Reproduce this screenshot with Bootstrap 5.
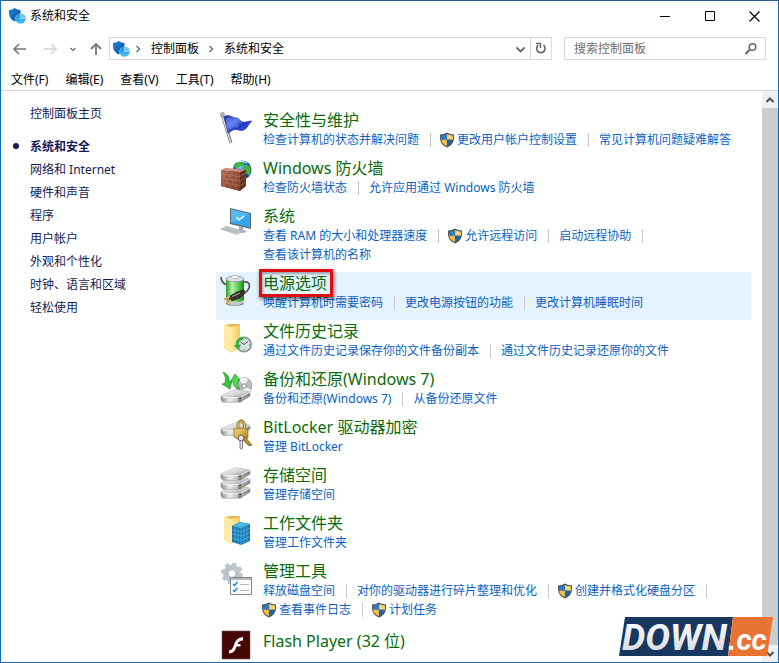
<!DOCTYPE html>
<html lang="zh-CN">
<head>
<meta charset="utf-8">
<meta name="viewport" content="width=device-width, initial-scale=1">
<title>系统和安全</title>
<link href="https://cdn.jsdelivr.net/npm/bootstrap@5.3.0/dist/css/bootstrap.min.css" rel="stylesheet">
<style>
body{font-family:"Noto Sans","Noto Sans CJK SC",sans-serif;font-size:12px;line-height:18px;color:#000;background:#fff}
.window{border:1px solid #0f6cbd;border-top-color:#2b6197}
a{text-decoration:none}
a:hover{text-decoration:underline}
.plain{border:0;background:none;padding:0;color:inherit;display:flex;align-items:center;justify-content:center}
.titlebar{height:30px;padding:0 1px 0 8px}
.wbtn{width:45px;height:28px}
.toolbar{padding:6px 12px 6px 8px}
.field{border:1px solid #d9d9d9;height:23px}
.crumbs{padding-left:3px}
.crumbs a{color:#000}
.chev{width:21px}
.search{flex:0 0 202px;min-width:0;margin-left:12px}
.search input{width:0;border:0;outline:0;min-width:0;padding:0 0 0 9px;color:#000;font-size:12px}
.search input::placeholder{color:#6d6d6d;opacity:1}
.menubar{gap:17px;padding:5px 10px 1px;border-bottom:1px solid #d9d9d9}
.menubar button{line-height:18px}
.sidebar{width:215px;padding:11px 0 0 29px;line-height:23px}
.sidebar a{color:#151c55}
.sidebar .home{margin-bottom:10px}
.sidebar .now{position:relative;font-weight:700}
.sidebar .now::before{content:"";position:absolute;left:-17px;top:8px;width:6px;height:6px;border-radius:50%;background:#151c55}
.content{padding:18px 11px 0 0}
.entry{padding:0 0 8px 4px;gap:11px}
.entry.hot{background:#e5f3ff}
.entry>svg{width:32px;height:32px;margin-top:3px;flex:none}
.entry h2{font-size:16px;line-height:22px;font-weight:400;margin:0 0 -1px}
.entry h2 a{color:#0b6b0b}
.links{line-height:19px}
.links a{color:#0b5fc0}
.links li{display:flex;align-items:center}
.links li:not(:last-child)::after{content:"";width:1px;height:14px;background:#c9c9c9;margin:0 10px 0 11px}
.links svg{width:16px;height:16px;margin:0 2px 0 -2px;flex:none}
.entry.solo{padding-top:3px}
.entry.solo>svg{margin-top:0}
.marked{position:relative;display:inline-block}
.marked::after{content:"";position:absolute;inset:-3px -6px -3px -4px;border:3px solid #e30b12;box-shadow:1px 2px 4px rgba(0,0,0,.6),inset 1px 2px 3px rgba(0,0,0,.35);pointer-events:none}
.scroller{width:16px;background:#f0f0f0}
.scroller button{height:17px;width:16px}
.thumb{background:#cdcdcd}
.brand{position:absolute;right:4px;bottom:4px;width:156px;height:42px}
.brand text{font-family:Roboto,"Liberation Sans",sans-serif;font-weight:700;font-style:italic}
</style>
</head>
<body>
<svg width="0" height="0" class="position-absolute" aria-hidden="true">
<defs>
<linearGradient id="gBlue" x2="1" y2="1"><stop stop-color="#1c86dc"/><stop offset="1" stop-color="#0a4e9c"/></linearGradient>
<linearGradient id="gCyan" x2="0" y2="1"><stop stop-color="#1592dc"/><stop offset="1" stop-color="#4cc4f4"/></linearGradient>
<linearGradient id="gFlag" x2="1" y2="1"><stop stop-color="#101c90"/><stop offset=".35" stop-color="#6a86f0"/><stop offset=".6" stop-color="#2437c4"/><stop offset="1" stop-color="#5c78e4"/></linearGradient>
<linearGradient id="gFold" x2="1" y2="0"><stop stop-color="#ffe9a2"/><stop offset="1" stop-color="#f1ca62"/></linearGradient>
<linearGradient id="gMetal" x2="1" y2="1"><stop stop-color="#fafafa"/><stop offset=".55" stop-color="#d4d4d4"/><stop offset="1" stop-color="#8a8a8a"/></linearGradient>
<linearGradient id="gSide" x2="1" y2="0"><stop stop-color="#8a8a8a"/><stop offset=".3" stop-color="#eee"/><stop offset="1" stop-color="#7b7b7b"/></linearGradient>
<linearGradient id="gBat" x2="1" y2="0"><stop stop-color="#2f9a35"/><stop offset=".35" stop-color="#b5f3a0"/><stop offset=".65" stop-color="#62cf5a"/><stop offset="1" stop-color="#1d8424"/></linearGradient>
<linearGradient id="gBrick" x2="1" y2="1"><stop stop-color="#b06a50"/><stop offset="1" stop-color="#7c3a28"/></linearGradient>
<linearGradient id="gGold" x2="1" y2="1"><stop stop-color="#f6dc82"/><stop offset="1" stop-color="#b07a16"/></linearGradient>
<linearGradient id="gSilver" x2="0" y2="1"><stop stop-color="#fff"/><stop offset="1" stop-color="#d3d7dc"/></linearGradient>
<radialGradient id="gGlobe" cx=".4" cy=".3"><stop stop-color="#9fe0ff"/><stop offset=".5" stop-color="#2a83d8"/><stop offset="1" stop-color="#0b3a8c"/></radialGradient>
<symbol id="sec" viewBox="0 0 17 16"><path d="M0 2Q3 2 5.800 0 8.500 2 11.500 2V6Q11 11 5.800 13.500 0 11 0 5Z" fill="url(#gBlue)"/><circle cx="11.500" cy="10.700" r="5.200" fill="#d5f0fd"/><circle cx="11.500" cy="10.700" r="5" fill="url(#gCyan)"/><path d="M11.500 10.700V5.700A5 5 0 0 1 16.500 10.200Z" fill="#6cc8f5"/><path d="M11.500 10.700 16.500 10.200M11.500 10.700V5.700" stroke="#d5f0fd" stroke-width=".5"/></symbol>
<symbol id="shield" viewBox="0 0 16 16"><path d="M8 .4Q11 2.400 15 2.500V6Q15 12.500 8 15.600 1 12.500 1 6V2.500Q5 2.400 8 .4Z" fill="#4b5157"/><path d="M7.900 1.900V7.800H2V3.500Q5.500 3.300 7.900 1.900Z" fill="#2b7dc4"/><path d="M8.100 1.900V7.800H14V3.500Q10.500 3.300 8.100 1.900Z" fill="#fcd06a"/><path d="M7.900 7.800V14.200Q2.800 12 2.100 7.800Z" fill="#f8c045"/><path d="M8.100 7.800V14.200Q13.200 12 13.900 7.800Z" fill="#1d65aa"/></symbol>
<symbol id="drive" viewBox="0 0 32 14"><path d="M1 7 15 .8Q17 .3 19 .8L31 3V7L21 13.500H3L1 11Z" fill="url(#gSide)" stroke="#888" stroke-width=".5"/><path d="M1 7 15 .8Q17 .3 19 .8L31 3 20 8.500H3Z" fill="url(#gMetal)"/><path d="M3 8.700H20L31 3.300" fill="none" stroke="#fff" stroke-width=".8"/><path d="M19 9 22 8V12.500L19 13Z" fill="#4d574d"/><circle cx="20.500" cy="11" r=".9" fill="#7ce43b"/></symbol>
</defs>
</svg>

<div class="window vh-100 d-flex flex-column overflow-hidden position-relative">
<header>
 <div class="titlebar d-flex align-items-center">
  <svg width="17" height="16"><use href="#sec"/></svg><span class="ms-1 flex-grow-1">系统和安全</span>
  <button class="plain wbtn" aria-label="最小化"><svg width="10" height="10"><path d="M0 5.500H10" stroke="#000"/></svg></button>
  <button class="plain wbtn" aria-label="最大化"><svg width="10" height="10"><path d="M.5.5H9.500V9.500H.5Z" fill="none" stroke="#000"/></svg></button>
  <button class="plain wbtn" aria-label="关闭"><svg width="11" height="11"><path d="M.5.5 10.500 10.500M10.500.5.500 10.500" stroke="#000" stroke-width="1.200"/></svg></button>
 </div>
 <div class="toolbar d-flex align-items-center">
  <button class="plain" aria-label="后退"><svg width="24" height="16"><path d="M5 8H17M10 3 5 8l5 5" fill="none" stroke="#777" stroke-width="1.600"/></svg></button>
  <button class="plain ms-1" aria-label="前进" disabled><svg width="26" height="16"><path d="M7 8H19M14 3l5 5-5 5" fill="none" stroke="#d4d4d4" stroke-width="1.600"/></svg></button>
  <button class="plain" aria-label="最近"><svg width="22" height="16"><path d="M7.500 7l2.500 2.500L12.500 7" fill="none" stroke="#777" stroke-width="1.500"/></svg></button>
  <button class="plain" aria-label="上移"><svg width="24" height="16"><path d="M11 14V3M6 8l5-5 5 5" fill="none" stroke="#777" stroke-width="1.800"/></svg></button>
  <nav class="field crumbs d-flex align-items-center flex-grow-1" aria-label="地址">
   <svg width="17" height="16"><use href="#sec"/></svg>
   <svg class="chev" height="12"><path d="M6.500 3l3 3-3 3" fill="none" stroke="#666" stroke-width="1.300"/></svg>
   <a href="#">控制面板</a>
   <svg class="chev ms-1" height="12"><path d="M6.500 3l3 3-3 3" fill="none" stroke="#666" stroke-width="1.300"/></svg>
   <a href="#">系统和安全</a>
   <button class="plain ms-auto" aria-label="展开地址"><svg width="18" height="14"><path d="M4.500 5.500l4 4 4-4" fill="none" stroke="#6a6a6a" stroke-width="1.800"/></svg></button>
  </nav>
  <button class="plain field border-start-0 px-1" aria-label="刷新"><svg width="12" height="13"><path d="M3.200 3.200A4.200 4.200 0 1 0 8.500 3.200" fill="none" stroke="#6a6a6a" stroke-width="1.700"/><path d="M1 1.500H5.500V6" fill="none" stroke="#6a6a6a" stroke-width="1.500"/></svg></button>
  <form class="field search d-flex align-items-center">
   <input class="flex-grow-1" type="search" placeholder="搜索控制面板" aria-label="搜索控制面板">
   <button type="button" class="plain" aria-label="搜索"><svg width="27" height="14"><circle cx="14.500" cy="5" r="3.300" fill="none" stroke="#666" stroke-width="1.500"/><path d="M12 7.500 7.500 12" stroke="#666" stroke-width="1.900"/></svg></button>
  </form>
 </div>
 <nav class="menubar d-flex" aria-label="菜单"><button class="plain">文件(F)</button><button class="plain">编辑(E)</button><button class="plain">查看(V)</button><button class="plain">工具(T)</button><button class="plain">帮助(H)</button></nav>
</header>

<div class="d-flex flex-grow-1 overflow-hidden">
<nav class="sidebar flex-shrink-0 d-flex flex-column align-items-start" aria-label="控制面板">
 <a class="home" href="#">控制面板主页</a>
 <a class="now" href="#" aria-current="page">系统和安全</a>
 <a href="#">网络和 Internet</a><a href="#">硬件和声音</a><a href="#">程序</a><a href="#">用户帐户</a><a href="#">外观和个性化</a><a href="#">时钟、语言和区域</a><a href="#">轻松使用</a>
</nav>
<main class="content flex-grow-1">

 <section class="entry d-flex">
  <svg viewBox="0 0 32 32"><path d="M2 2 11 31" stroke="#777" stroke-width="3"/><path d="M1.800 2 10.800 31" stroke="#e4e4e4" stroke-width="1.200"/><circle cx="2.500" cy="2.500" r="2" fill="#bbb" stroke="#777" stroke-width=".6"/><path d="M4 5C9 1 12 6 17 6 20 6 19 9 23 10 26 10.500 29 8.500 32 9 28 12 28 16 24 18 19 20 17 16 13 18 10 20 9 21 8 21Z" fill="url(#gFlag)" stroke="#1a2890" stroke-width=".5"/><path d="M6 6C10 4 12 9 17 9L18 16C14 14 11 17 9 18Z" fill="#6782f0" opacity=".5"/></svg>
  <div><h2><a href="#">安全性与维护</a></h2><ul class="links list-unstyled d-flex flex-wrap mb-0"><li><a href="#">检查计算机的状态并解决问题</a></li><li><svg><use href="#shield"/></svg><a href="#">更改用户帐户控制设置</a></li><li><a href="#">常见计算机问题疑难解答</a></li></ul></div>
 </section>

 <section class="entry d-flex">
  <svg viewBox="0 0 32 32"><circle cx="22" cy="10" r="9.500" fill="url(#gGlobe)"/><path d="M15 4Q20 0 24 2L22 6 17 8 14 7ZM24 6Q28 3 30 7 32 12 29 16L26 13 24 10Z" fill="#46b43a"/><path d="M17 2Q22 0 27 3" stroke="#d6f5ff" fill="none"/><path d="M1 10 20 12 26 9.500V26L20 31 1 26Z" fill="#64301f"/><path d="M1 10 20 12V31L1 26Z" fill="url(#gBrick)"/><path d="M1 10 5 8 26 9.500 20 12Z" fill="#cf9079"/><path d="M1 14 20 16.500M1 18 20 21M1 22 20 26M6 10.500V14.600M12 11.500V15.500M4 14.500V18.500M10 15.500V19.500M16 16V20.500M7 19V23.300M13 20V24.500M4 22.800V27M10 24V28.500M16 25V30M20 16.500 26 13M20 21 26 17M20 26 26 21.500" stroke="#c08a76" stroke-width=".5"/></svg>
  <div><h2><a href="#">Windows 防火墙</a></h2><ul class="links list-unstyled d-flex flex-wrap mb-0"><li><a href="#">检查防火墙状态</a></li><li><a href="#">允许应用通过 Windows 防火墙</a></li></ul></div>
 </section>

 <section class="entry d-flex">
  <svg viewBox="0 0 32 32"><path d="M10 0 31 5V21L10 16Z" fill="#58636c"/><path d="M11 1.300 30 6V19.500L11 15Z" fill="#35a6ec"/><path d="M11 1.300 30 6 11 15Z" fill="#69c4f6" opacity=".65"/><path d="M16.500 9 19 12 24 8" fill="none" stroke="#fff" stroke-width="1.300"/><path d="M19 18V22L16 24 24 25 27 23 23 22V19" fill="#a4abb0"/><path d="M1 21 7 18.500 23 23 17 26.500Z" fill="#d5d8da" stroke="#989da0" stroke-width=".6"/><path d="M3 21 19 25M5 20 21 24M5 22.500 10 20M9 23.500 14 21M13 24.500 18 22" stroke="#989da0" stroke-width=".5"/></svg>
  <div><h2><a href="#">系统</a></h2><ul class="links list-unstyled d-flex flex-wrap mb-0"><li><a href="#">查看 RAM 的大小和处理器速度</a></li><li><svg><use href="#shield"/></svg><a href="#">允许远程访问</a></li><li><a href="#">启动远程协助</a></li><li><a href="#">查看该计算机的名称</a></li></ul></div>
 </section>

 <section class="entry hot d-flex">
  <svg viewBox="0 0 32 32"><path d="M1 2Q1 8 7 10M23 7Q31 6 29 13 27 18 20 20" stroke="#555" stroke-width="1.700" fill="none"/><ellipse cx="15" cy="28.500" rx="9" ry="2.600" fill="#888"/><path d="M6 4V27Q15 33 24 27V4Z" fill="url(#gBat)"/><path d="M6 25V27.500Q15 33.500 24 27.500V25Q15 30 6 25Z" fill="#c9c9c9"/><ellipse cx="15" cy="4" rx="9" ry="2.800" fill="#e0e0e0" stroke="#888" stroke-width=".7"/><ellipse cx="15" cy="2" rx="4" ry="1.600" fill="#fafafa" stroke="#999" stroke-width=".6"/><path d="M10 21 17 17 24 15 25 18 20 23 12 26 9 24Z" fill="#3a3330" stroke="#1c1816" stroke-width=".7"/><path d="M12 21.500 20 18" stroke="#aaa"/><path d="M10 21.500 4 24.500M11 25 6 28" stroke="#d9a766" stroke-width="2"/></svg>
  <div><h2><a class="marked" href="#">电源选项</a></h2><ul class="links list-unstyled d-flex flex-wrap mb-0"><li><a href="#">唤醒计算机时需要密码</a></li><li><a href="#">更改电源按钮的功能</a></li><li><a href="#">更改计算机睡眠时间</a></li></ul></div>
 </section>

 <section class="entry d-flex">
  <svg viewBox="0 0 32 32"><path d="M7 1H20V25L7 23Z" fill="#e6b950"/><path d="M4 1 11 4V30L4 25Z" fill="#ffe9a5"/><path d="M11 4 20 2V25L11 30Z" fill="url(#gFold)"/><circle cx="24" cy="21.500" r="7.200" fill="#d9dee2" stroke="#8a9298" stroke-width="1.600"/><path d="M20.500 19 24 21.500 28 18.500M24 26.500V27.500M29 22H30M24 15.500V16.500" stroke="#535a60" stroke-width="1" fill="none"/><path d="M23 14Q15 15 16 22H13.500L18.500 27 21 21.500H18.500Q19 17.500 23 16.500Z" fill="#35ac48"/></svg>
  <div><h2><a href="#">文件历史记录</a></h2><ul class="links list-unstyled d-flex flex-wrap mb-0"><li><a href="#">通过文件历史记录保存你的文件备份副本</a></li><li><a href="#">通过文件历史记录还原你的文件</a></li></ul></div>
 </section>

 <section class="entry d-flex">
  <svg viewBox="0 0 32 32"><ellipse cx="24" cy="15" rx="8" ry="8.500" fill="#bdbdbd" stroke="#888" stroke-width=".7"/><path d="M24 15 19 8.500Q23 5 28 8ZM24 15 31 19Q28 24 22 23Z" fill="#f5f5f5"/><circle cx="24" cy="15" r="2.200" fill="#fff" stroke="#888"/><use href="#drive" y="18" width="31" height="14"/><path d="M3 1Q10 4 9 11L12 9.500 10 18 2 13 5 12.500Q7 6 3 1Z" fill="#38c83e" stroke="#158a1e" stroke-width=".7"/><path d="M15 3 20 9 18 9.500Q17 15 20 18 13 17 13 10L10.500 10.500Z" fill="#4fd654" stroke="#158a1e" stroke-width=".7"/></svg>
  <div><h2><a href="#">备份和还原(Windows 7)</a></h2><ul class="links list-unstyled d-flex flex-wrap mb-0"><li><a href="#">备份和还原(Windows 7)</a></li><li><a href="#">从备份还原文件</a></li></ul></div>
 </section>

 <section class="entry d-flex">
  <svg viewBox="0 0 32 32"><use href="#drive" y="3" width="31" height="14"/><path d="M18 9V5Q21 -1 24.500 5V9" fill="none" stroke="#8d6c22" stroke-width="2.800"/><path d="M18 9V5Q21 0 24.500 5V9" fill="none" stroke="#f0d57b" stroke-width="1.200"/><path d="M14 10 24 9 28 11V19L19 21 14 18Z" fill="url(#gGold)" stroke="#8d671c" stroke-width=".7"/><path d="M24 17 32 26 29 27 22 20Z" fill="#b98b32" stroke="#76521a" stroke-width=".7"/><circle cx="21" cy="19" r="2.800" fill="#eee" stroke="#666"/><path d="M20 21.500H22.500V29L21.300 30.500 20 29Z" fill="#e6e6e6" stroke="#666" stroke-width=".8"/></svg>
  <div><h2><a href="#">BitLocker 驱动器加密</a></h2><ul class="links list-unstyled d-flex flex-wrap mb-0"><li><a href="#">管理 BitLocker</a></li></ul></div>
 </section>

 <section class="entry d-flex">
  <svg viewBox="0 0 32 32"><use href="#drive" y="18" width="31" height="14"/><use href="#drive" y="9" width="31" height="14"/><use href="#drive" y="0" width="31" height="14"/></svg>
  <div><h2><a href="#">存储空间</a></h2><ul class="links list-unstyled d-flex flex-wrap mb-0"><li><a href="#">管理存储空间</a></li></ul></div>
 </section>

 <section class="entry d-flex">
  <svg viewBox="0 0 32 32"><path d="M7 1H20V25L7 23Z" fill="#e6b950"/><path d="M4 1 11 4V29L4 25Z" fill="#ffe9a5"/><path d="M11 4 20 2V25L11 29Z" fill="url(#gFold)"/><path d="M12 11 20 7 30 9V26L21 30 12 27Z" fill="#1878b5"/><path d="M12 11 20 7 30 9 21 13Z" fill="#4fb4e2"/><path d="M21 13V30M12 15 21 17 30 13M12 19 21 21 30 17M12 23 21 25.500 30 21.500M15 12V28M18 12.500V29M24 12V28.500M27 10.500V27" stroke="#58b4e0" stroke-width=".7" fill="none"/></svg>
  <div><h2><a href="#">工作文件夹</a></h2><ul class="links list-unstyled d-flex flex-wrap mb-0"><li><a href="#">管理工作文件夹</a></li></ul></div>
 </section>

 <section class="entry d-flex">
  <svg viewBox="0 0 32 32"><circle cx="12" cy="10.500" r="6.500" fill="none" stroke="#bec5cc" stroke-width="5"/><circle cx="12" cy="10.500" r="9.500" fill="none" stroke="#bec5cc" stroke-width="3" stroke-dasharray="4 3.460"/><circle cx="12" cy="10.500" r="4" fill="#fff" stroke="#97a1aa" stroke-width=".8"/><path d="M10.500 14.500H31.500V31.500H10.500Z" fill="#fbfcfd" stroke="#84898e"/><path d="M11 15H31V17H11Z" fill="#b3b9bf"/><path d="M13 21l1.500 1.500 3-3.500M13 27l1.500 1.500 3-3.500" stroke="#1685d0" stroke-width="1.400" fill="none"/><path d="M20 21.500H29M20 27.500H29" stroke="#b3b9bf"/></svg>
  <div><h2><a href="#">管理工具</a></h2><ul class="links list-unstyled d-flex flex-wrap mb-0"><li><a href="#">释放磁盘空间</a></li><li><a href="#">对你的驱动器进行碎片整理和优化</a></li><li><svg><use href="#shield"/></svg><a href="#">创建并格式化硬盘分区</a></li><li><svg><use href="#shield"/></svg><a href="#">查看事件日志</a></li><li><svg><use href="#shield"/></svg><a href="#">计划任务</a></li></ul></div>
 </section>

 <section class="entry solo d-flex">
  <svg viewBox="0 0 32 32"><path d="M2 1H30V29H2Z" fill="#450505" stroke="#6f5050" stroke-width=".6"/><path d="M23 7V10.500Q18.500 10.500 17.500 14H20.500V16.500H16.500Q14.500 23.500 9 23.500V20.500Q12.500 20 14 15 16 7.500 23 7Z" fill="#fff"/></svg>
  <div><h2><a href="#">Flash Player (32 位)</a></h2></div>
 </section>
</main>
<div class="scroller d-flex flex-column flex-shrink-0">
 <button class="plain" aria-label="向上滚动"><svg width="10" height="8"><path d="M1.500 6 5 2.500 8.500 6" fill="none" stroke="#505050" stroke-width="2"/></svg></button>
 <div class="thumb flex-grow-1"></div>
 <button class="plain" aria-label="向下滚动"><svg width="10" height="8"><path d="M1.500 2 5 5.500 8.500 2" fill="none" stroke="#505050" stroke-width="2"/></svg></button>
</div>
</div>

<svg class="brand" viewBox="0 0 156 42" role="img" aria-label="DOWN.cc">
<path d="M7 1H115L110 40H1Z" fill="#17375e"/><path d="M115 1H155L149 40H110Z" fill="#e87333"/>
<text x="4" y="34" font-size="37" fill="url(#gSilver)">DOWN</text><text x="110" y="34" font-size="30" fill="#fff">.cc</text>
</svg>
</div>
<script src="https://cdn.jsdelivr.net/npm/bootstrap@5.3.0/dist/js/bootstrap.bundle.min.js"></script>
</body>
</html>
